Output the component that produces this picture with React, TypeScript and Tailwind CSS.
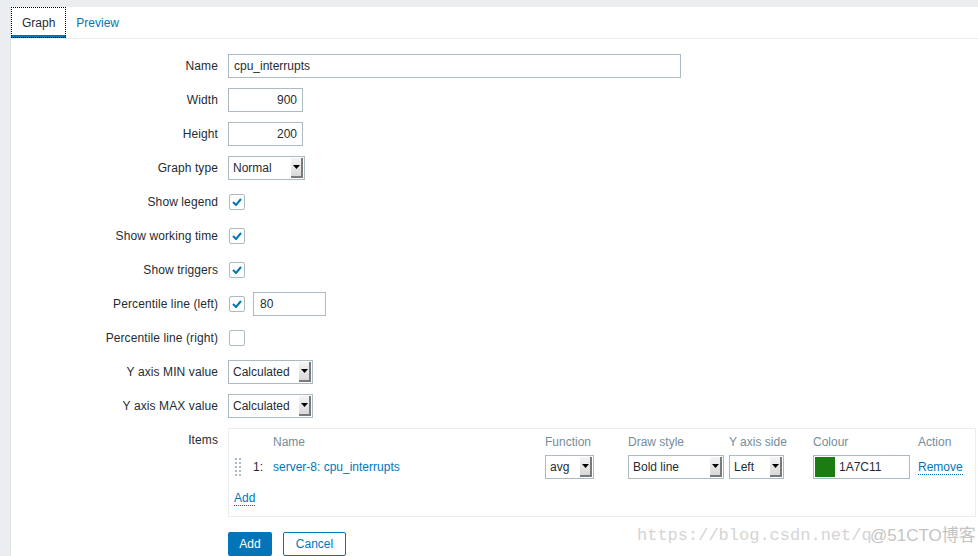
import React from "react";

const font = { fontFamily: '"Liberation Sans", Arial, sans-serif' };

function Arrow() {
  return (
    <span className="flex h-[20px] w-[12px] shrink-0 items-center justify-center border-r-2 border-b-2 border-r-[#7a7a7a] border-b-[#7a7a7a] bg-gradient-to-b from-[#f4f4f4] to-[#d9d9d9]">
      <svg width="7" height="4" viewBox="0 0 7 4">
        <path d="M0 0h7L3.5 4z" fill="#000" />
      </svg>
    </span>
  );
}

function Select({ value, w }: { value: string; w: string }) {
  return (
    <div className={`flex h-[24px] ${w} items-center justify-between border border-[#acbbc2] bg-white pl-[4px] pr-[1px] text-[12px] text-[#1f2c33]`}>
      <span>{value}</span>
      <Arrow />
    </div>
  );
}

function Check({ on }: { on: boolean }) {
  return (
    <div className="ml-[1px] flex h-[16px] w-[16px] items-center justify-center rounded-[2px] border border-[#acbbc2] bg-white">
      {on && (
        <svg width="10" height="8" viewBox="0 0 10 8">
          <path d="M1 4l3 3 5-6" fill="none" stroke="#0275b8" strokeWidth="2" />
        </svg>
      )}
    </div>
  );
}

function Row({ label, children }: { label: string; children: React.ReactNode }) {
  return (
    <div className="flex min-h-[24px]">
      <div className="flex h-[24px] w-[207px] shrink-0 items-center justify-end text-[12px] tracking-[0.1px] text-[#1f2c33]">{label}</div>
      <div className="ml-[10px] flex min-h-[24px] items-center">{children}</div>
    </div>
  );
}

function Handle() {
  const dots = [] as React.ReactNode[];
  for (let r = 0; r < 5; r++) {
    for (let c = 0; c < 2; c++) {
      dots.push(<rect key={`${r}-${c}`} x={c * 4} y={r * 4} width="2" height="2" fill="#acbbc2" />);
    }
  }
  return (
    <svg width="6" height="18" viewBox="0 0 6 18">
      {dots}
    </svg>
  );
}

export default function App() {
  return (
    <div className="relative h-[556px] overflow-hidden bg-[#ebeef0] pl-[10px] pt-[7px]" style={font}>
      <div className="h-full border-l border-[#dfe4e7] bg-white">
        <div className="flex h-[32px] border-b border-[#ebeef0] text-[12px]">
          <div className="flex h-[31px] items-center border-b-[3px] border-[#0275b8] px-[11px] pt-[3px] text-[#1f2c33] outline outline-1 outline-dotted outline-black -outline-offset-1">
            Graph
          </div>
          <div className="flex h-[31px] items-center px-[10px] text-[#0275b8]">Preview</div>
        </div>

        <div className="flex flex-col gap-[10px] pt-[15px]">
          <Row label="Name">
            <div className="flex h-[24px] w-[453px] items-center border border-[#acbbc2] px-[5px] text-[12px] text-[#1f2c33]">cpu_interrupts</div>
          </Row>
          <Row label="Width">
            <div className="flex h-[24px] w-[75px] items-center justify-end border border-[#acbbc2] px-[5px] text-[12px] text-[#1f2c33]">900</div>
          </Row>
          <Row label="Height">
            <div className="flex h-[24px] w-[75px] items-center justify-end border border-[#acbbc2] px-[5px] text-[12px] text-[#1f2c33]">200</div>
          </Row>
          <Row label="Graph type">
            <Select value="Normal" w="w-[77px]" />
          </Row>
          <Row label="Show legend">
            <Check on />
          </Row>
          <Row label="Show working time">
            <Check on />
          </Row>
          <Row label="Show triggers">
            <Check on />
          </Row>
          <Row label="Percentile line (left)">
            <Check on />
            <div className="ml-[8px] flex h-[24px] w-[73px] items-center border border-[#acbbc2] px-[6px] text-[12px] text-[#1f2c33]">80</div>
          </Row>
          <Row label="Percentile line (right)">
            <Check on={false} />
          </Row>
          <Row label="Y axis MIN value">
            <Select value="Calculated" w="w-[85px]" />
          </Row>
          <Row label="Y axis MAX value">
            <Select value="Calculated" w="w-[85px]" />
          </Row>
          <Row label="Items">
            <div className="flex h-[89px] w-[748px] flex-col border border-[#ebeef0] pl-[5px] pt-[6px] text-[12px]">
              <div className="flex h-[14px] items-center text-[#768d99]">
                <div className="w-[39px]" />
                <div className="w-[272px]">Name</div>
                <div className="w-[83px]">Function</div>
                <div className="w-[101px]">Draw style</div>
                <div className="w-[84px]">Y axis side</div>
                <div className="w-[105px]">Colour</div>
                <div>Action</div>
              </div>
              <div className="mt-[6px] flex h-[24px] items-center text-[#1f2c33]">
                <div className="flex w-[19px] items-center pl-[1px]"><Handle /></div>
                <div className="w-[20px]">1:</div>
                <div className="w-[272px] text-[#0275b8]">server-8: cpu_interrupts</div>
                <div className="w-[83px]"><Select value="avg" w="w-[49px]" /></div>
                <div className="w-[101px]"><Select value="Bold line" w="w-[96px]" /></div>
                <div className="w-[84px]"><Select value="Left" w="w-[55px]" /></div>
                <div className="w-[105px]">
                  <div className="flex h-[24px] w-[97px] items-center border border-[#acbbc2] pl-[1px]">
                    <div className="h-[20px] w-[20px] bg-[#1a7c11]" />
                    <span className="ml-[4px]">1A7C11</span>
                  </div>
                </div>
                <div className="border-b border-dotted border-[#0275b8] leading-[14px] text-[#0275b8]">Remove</div>
              </div>
              <div className="mt-[12px] flex">
                <span className="border-b border-dotted border-[#0275b8] leading-[14px] text-[#0275b8]">Add</span>
              </div>
            </div>
          </Row>
          <div className="ml-[217px] mt-[5px] flex gap-[11px] text-[12px]">
            <div className="flex h-[24px] w-[44px] items-center justify-center rounded-[2px] bg-[#0275b8] text-white">Add</div>
            <div className="flex h-[24px] w-[63px] items-center justify-center rounded-[2px] border border-[#0275b8] bg-white text-[#0275b8]">Cancel</div>
          </div>
        </div>
      </div>

      <div
        className="pointer-events-none absolute left-[637px] top-[526px] text-[17px] leading-[20px] text-[#d4d4d4]"
        style={{ fontFamily: '"Liberation Mono", "Courier New", monospace' }}
      >
        https://blog.csdn.net/q
      </div>
      <div
        className="pointer-events-none absolute left-[870px] top-[526px] text-[17px] leading-[20px] text-[#c4c4c4]"
        style={{ fontFamily: '"Liberation Sans", "Noto Sans CJK SC", sans-serif' }}
      >
        @51CTO博客
      </div>
    </div>
  );
}
